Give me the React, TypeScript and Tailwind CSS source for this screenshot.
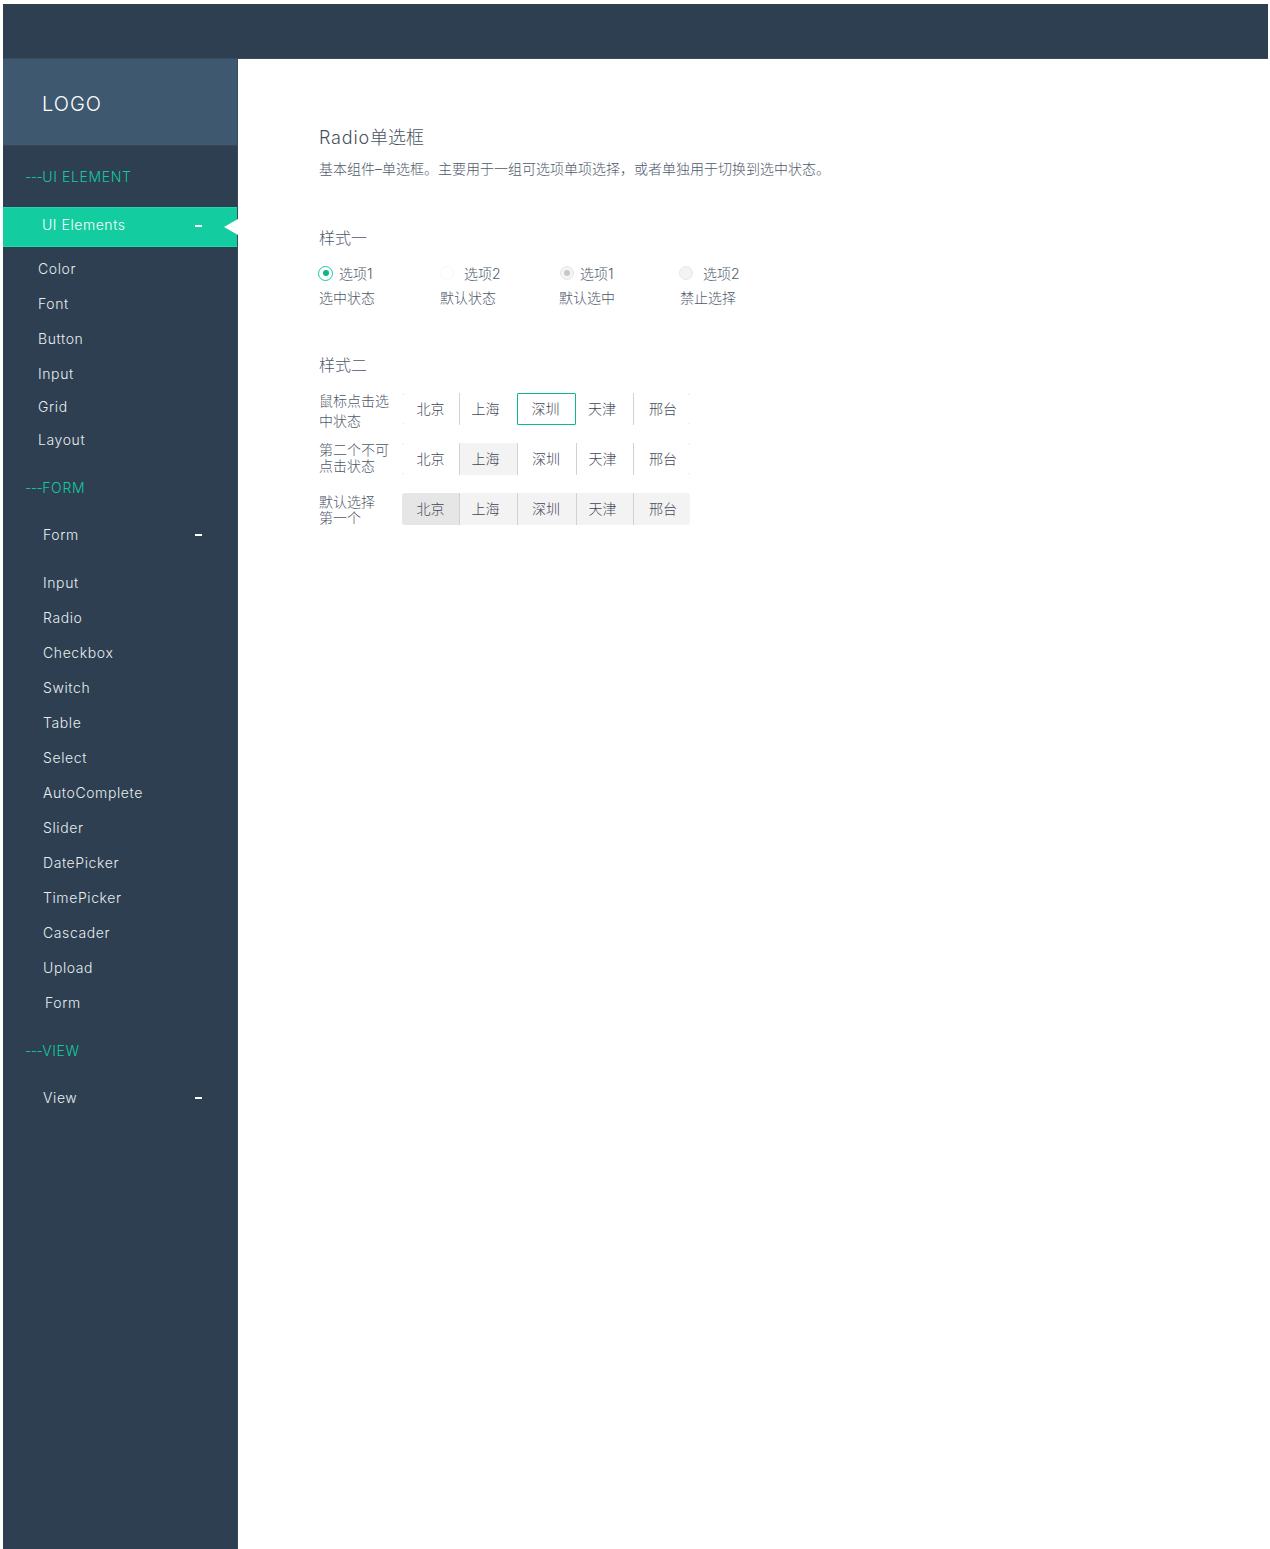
const cjk = "font-['Inter','Noto_Sans_CJK_SC',sans-serif]";

function Minus() {
  return <span className="h-[2px] w-[7px] bg-white" />;
}

function Group({ children }: { children: string }) {
  return (
    <div className="flex h-[61px] items-center pl-[22px] text-[14px] font-light tracking-[0.65px] text-[#13c9a0]">
      <span className="tracking-[-0.6px]">---</span>
      <span>{children}</span>
    </div>
  );
}

function Item({ label, h = 'h-[35px]', pl = 'pl-[40px]', mt = '' }: { label: string; h?: string; pl?: string; mt?: string }) {
  return <div className={`flex items-center text-[14px] font-light tracking-[0.6px] text-[#e8edf1] ${h} ${pl} ${mt}`}>{label}</div>;
}

function Parent({ label }: { label: string }) {
  return (
    <div className="flex h-[33px] items-center justify-between pl-[40px] pr-[35px] text-[14px] font-light tracking-[0.6px] text-[#e8edf1]">
      <span>{label}</span>
      <Minus />
    </div>
  );
}

function Sidebar() {
  const form = ['Input', 'Radio', 'Checkbox', 'Switch', 'Table', 'Select', 'AutoComplete', 'Slider', 'DatePicker', 'TimePicker', 'Cascader', 'Upload'];
  return (
    <aside className="w-[235px] shrink-0 border-r border-[#384c60] bg-[#2d3f50]">
      <div className="flex h-[87px] items-center border-b border-[#33465a] bg-[#3e5870] pl-[39px] pt-[4px] text-[20px] font-light tracking-[1px] text-white">LOGO</div>
      <Group>UI ELEMENT</Group>
      <div className="relative flex h-[40px] items-center justify-between border-y border-[#1cdcae] bg-[#13cca0] pb-[5px] pl-[39px] pr-[35px] text-[14px] font-light tracking-[0.55px] text-white">
        <span>UI Elements</span>
        <span className="mt-[3px] h-[2px] w-[7px] bg-white" />
        <svg className="absolute right-[-1px] top-[11px]" width="14" height="16" viewBox="0 0 14 16">
          <path d="M0 8 L14 0 L14 16 Z" fill="#ffffff" />
        </svg>
      </div>
      <div className="pt-[4px]">
        <Item label="Color" pl="pl-[35px]" />
        <Item label="Font" pl="pl-[35px]" />
        <Item label="Button" pl="pl-[35px]" />
        <Item label="Input" pl="pl-[35px]" h="h-[33px]" mt="mt-[1px]" />
        <Item label="Grid" pl="pl-[35px]" h="h-[33px]" />
        <Item label="Layout" pl="pl-[35px]" h="h-[33px]" />
      </div>
      <div className="mt-[1px]"><Group>FORM</Group></div>
      <Parent label="Form" />
      <div className="pt-[14px]">
        {form.map((f) => <Item key={f} label={f} />)}
        <Item label="Form" pl="pl-[42px]" />
      </div>
      <Group>VIEW</Group>
      <Parent label="View" />
    </aside>
  );
}

function Radio({ state, ml = 'ml-0', gap = 'gap-[6px]', text }: { state: 'on' | 'off' | 'dis-on' | 'dis'; ml?: string; gap?: string; text: string }) {
  const cls = {
    on: 'h-[15px] w-[15px] border-[1.5px] border-[#13cca0] bg-white',
    off: 'h-[14px] w-[14px] border border-[#f8f8f8] bg-white',
    'dis-on': 'h-[14px] w-[14px] border border-[#e6e6e6] bg-[#f4f4f4]',
    dis: 'h-[14px] w-[14px] border border-[#e8e8e8] bg-[#f3f3f3]',
  }[state];
  return (
    <div className={`flex h-[20px] items-center ${gap} ${ml}`}>
      <span className={`flex items-center justify-center rounded-full ${cls}`}>
        {state === 'on' && <span className="h-[6px] w-[6px] rounded-full bg-[#08b78c]" />}
        {state === 'dis-on' && <span className="h-[6px] w-[6px] rounded-full bg-[#c8c8c8]" />}
      </span>
      <span>{text}</span>
    </div>
  );
}

function Corners() {
  return (
    <>
      <span className="absolute left-0 top-0 h-[2px] w-[2px] rounded-tl-[2px] bg-[#ececec]" />
      <span className="absolute right-0 top-0 h-[2px] w-[2px] rounded-tr-[2px] bg-[#ececec]" />
      <span className="absolute bottom-0 left-0 h-[2px] w-[2px] rounded-bl-[2px] bg-[#ececec]" />
      <span className="absolute bottom-0 right-0 h-[2px] w-[2px] rounded-br-[2px] bg-[#ececec]" />
    </>
  );
}

function SegmentRow({ label, leading, offset, active, fills, mt, corners }: { label: string[]; leading: string; offset: string; active?: number; fills: string[]; mt: string; corners?: boolean }) {
  const cities = ['北京', '上海', '深圳', '天津', '邢台'];
  const widths = ['w-[57px]', 'w-[58px] pr-[6px]', 'w-[59px] pr-[2px]', 'w-[57px] pr-[5px]', 'w-[57px] pl-[2px]'];
  return (
    <div className={`flex h-[32px] items-center ${mt}`}>
      <div className={`w-[83px] text-[14px] ${leading} ${offset}`}>
        {label.map((l) => <div key={l}>{l}</div>)}
      </div>
      <div className="relative flex h-full w-[288px] overflow-hidden rounded-[3px] text-[14px] text-[#3f4757]">
        {corners && <Corners />}
        {cities.map((c, i) => (
          <div
            key={c}
            className={`flex h-full items-center justify-center pb-[2px] ${widths[i]} ${fills[i]} ${active === i ? 'rounded-[1px] border border-[#0cb88e]' : i > 0 && active !== i - 1 ? 'border-l border-[#d2d2d2]' : ''}`}
          >
            {c}
          </div>
        ))}
      </div>
    </div>
  );
}

export default function App() {
  const none = ['', '', '', '', ''];
  return (
    <div className={`min-h-[1549px] bg-white pl-[3px] pr-[2px] pt-[4px] font-light text-[#4f596b] ${cjk}`}>
      <header className="h-[55px] border-b border-[#384c60] bg-[#2d3f50]" />
      <div className="flex h-[1490px]">
        <Sidebar />
        <main className="pl-[81px] pt-[67px]">
          <h1 className="text-[18px] leading-[24px] text-[#4a5261]"><span className="tracking-[0.8px]">Radio</span>单选框</h1>
          <p className="mt-[9px] text-[14px] leading-[20px]">基本组件–单选框。主要用于一组可选项单项选择，或者单独用于切换到选中状态。</p>

          <h2 className="mt-[47px] text-[16px] leading-[24px]">样式一</h2>
          <div className="mt-[13px] flex text-[14px]">
            <div className="w-[121px]">
              <Radio state="on" text="选项1" ml="-ml-[1px]" />
              <div className="mt-[5px] leading-[20px]">选中状态</div>
            </div>
            <div className="w-[119px]">
              <Radio state="off" text="选项2" gap="gap-[10px]" />
              <div className="mt-[5px] leading-[20px]">默认状态</div>
            </div>
            <div className="w-[121px]">
              <Radio state="dis-on" text="选项1" ml="ml-[1px]" />
              <div className="mt-[5px] leading-[20px]">默认选中</div>
            </div>
            <div>
              <Radio state="dis" text="选项2" gap="gap-[10px]" ml="-ml-[1px]" />
              <div className="mt-[5px] leading-[20px]">禁止选择</div>
            </div>
          </div>

          <h2 className="mt-[45px] text-[16px] leading-[24px]">样式二</h2>
          <SegmentRow mt="mt-[16px]" label={['鼠标点击选', '中状态']} leading="leading-[20px]" offset="pt-[4px]" active={2} fills={none} corners />
          <SegmentRow mt="mt-[18px]" label={['第二个不可', '点击状态']} leading="leading-[16px]" offset="pb-[2px]" fills={['', 'bg-[#f3f3f3]', '', '', '']} corners />
          <SegmentRow mt="mt-[18px]" label={['默认选择', '第一个']} leading="leading-[16px]" offset="pt-[2px]" fills={['bg-[#e6e6e6]', 'bg-[#f3f3f3]', 'bg-[#f3f3f3]', 'bg-[#f3f3f3]', 'bg-[#f3f3f3]']} />
        </main>
      </div>
    </div>
  );
}
